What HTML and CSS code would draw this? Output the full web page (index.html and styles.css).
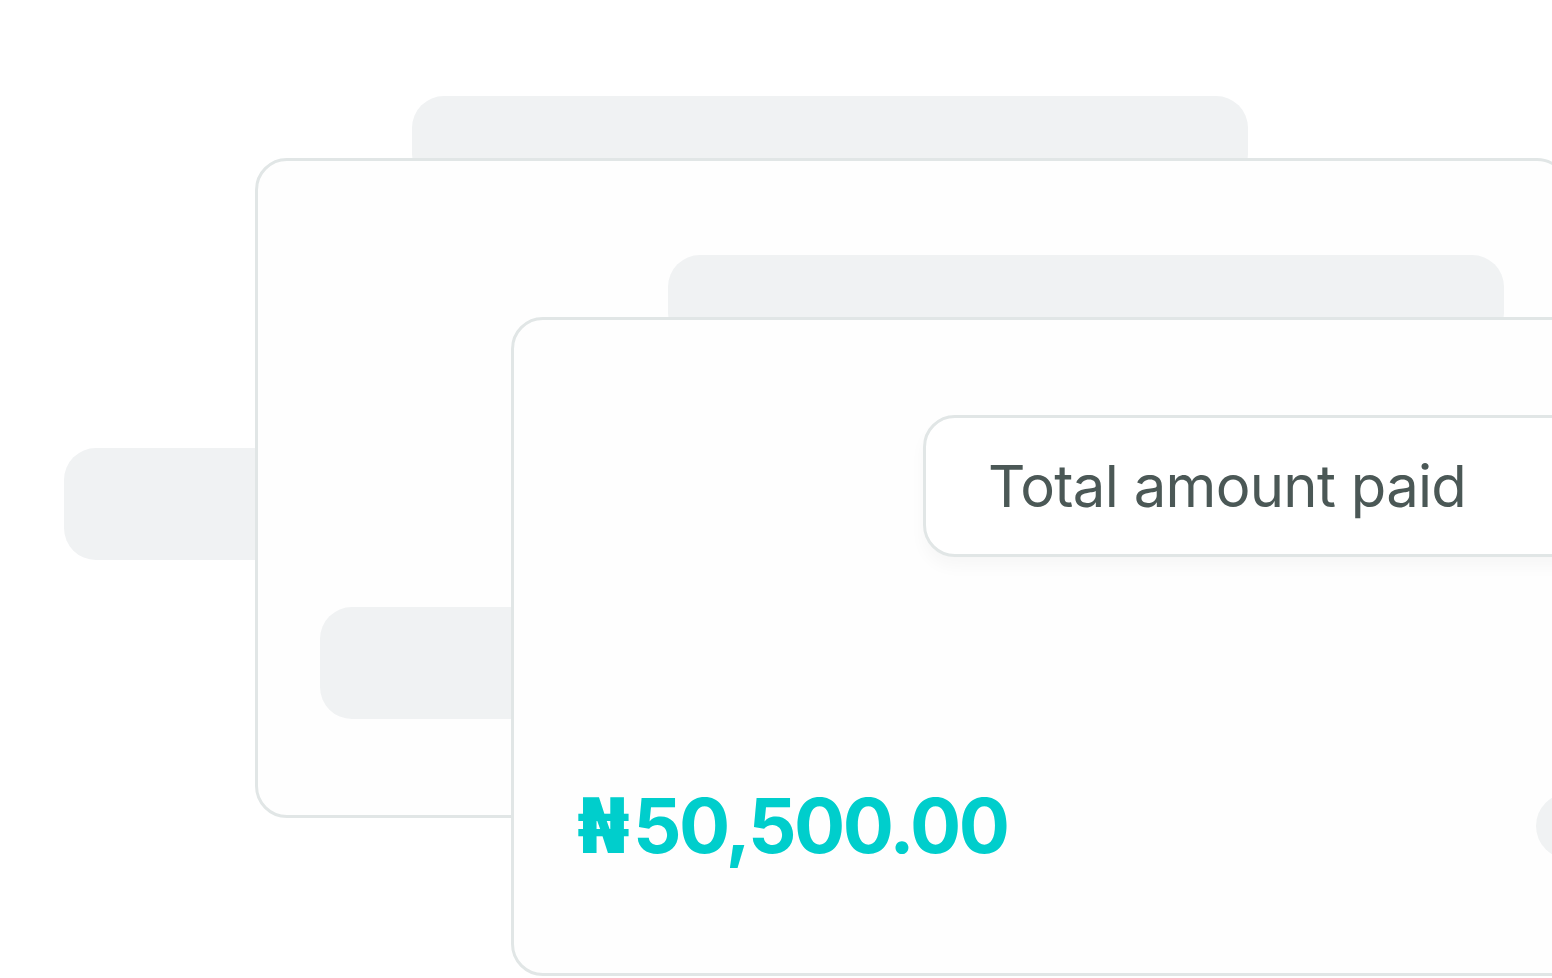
FILE: index.html
```html
<!DOCTYPE html>
<html lang="en">
<head>
<meta charset="utf-8">
<title>Total amount paid</title>
<link rel="stylesheet" href="styles.css">
</head>
<body>
<div class="scene">
  <div class="layer layer-outer">
    <div class="tab"></div>
    <div class="side"></div>
    <div class="card card-outer">
      <div class="layer layer-inner">
        <div class="tab"></div>
        <div class="side"></div>
        <div class="card card-inner">
          <div class="label-pill">
            <span class="label-text">Total amount paid</span>
          </div>
          <div class="amount-row">
            <span class="amount"><span class="currency">₦</span>50,500.00</span>
            <span class="chip"></span>
          </div>
        </div>
      </div>
    </div>
  </div>
</div>
</body>
</html>
```

FILE: styles.css
```css
* { box-sizing: border-box; }

html, body {
  margin: 0;
  padding: 0;
  background: #ffffff;
  overflow: hidden;
  width: 1552px;
  height: 978px;
  font-family: "Inter", "Liberation Sans", sans-serif;
}

.scene {
  width: 1552px;
  height: 978px;
  overflow: hidden;
}

.layer {
  position: relative;
  width: 1314px;
}

.layer-outer {
  margin-left: 255px;
  padding-top: 96px;
}

.layer-inner {
  margin-left: 253px;
  padding-top: 94px;
}

.tab {
  width: 836px;
  height: 90px;
  margin-left: 157px;
  margin-bottom: -28px;
  background: #f0f2f3;
  border-radius: 32px;
}

.side {
  position: absolute;
  left: -191px;
  width: 240px;
  height: 112px;
  background: #f0f2f3;
  border-radius: 32px;
}

.layer-outer > .side { top: 448px; }
.layer-inner > .side { top: 446px; }

.card {
  position: relative;
  z-index: 1;
  width: 1314px;
  height: 660px;
  background: #fefefe;
  border: 3px solid #e1e6e6;
  border-radius: 32px;
}

.card-inner {
  height: 659px;
  padding: 95px 63px 0 409px;
}

.label-pill {
  display: flex;
  align-items: center;
  width: 1000px;
  height: 142px;
  padding-left: 62px;
  background: #ffffff;
  border: 3px solid #e1e6e6;
  border-radius: 32px;
  box-shadow: 0 10px 16px rgba(0, 0, 0, 0.03);
}

.label-text {
  font-size: 58px;
  font-weight: 400;
  color: #4b5856;
  letter-spacing: -0.7px;
  white-space: nowrap;
}

.amount-row {
  display: flex;
  align-items: center;
  margin-left: -346px;
  margin-top: 230px;
}

.amount {
  font-size: 76px;
  font-weight: 700;
  color: #00cecc;
  line-height: 1;
  letter-spacing: -2.5px;
  white-space: nowrap;
}

.currency {
  font-family: "DejaVu Sans", "Noto Sans", sans-serif;
  font-weight: 700;
  letter-spacing: 0;
  margin-right: 3px;
}

.chip {
  margin-left: auto;
  width: 223px;
  height: 66px;
  border-radius: 33px;
  background: #f0f2f3;
}
```
